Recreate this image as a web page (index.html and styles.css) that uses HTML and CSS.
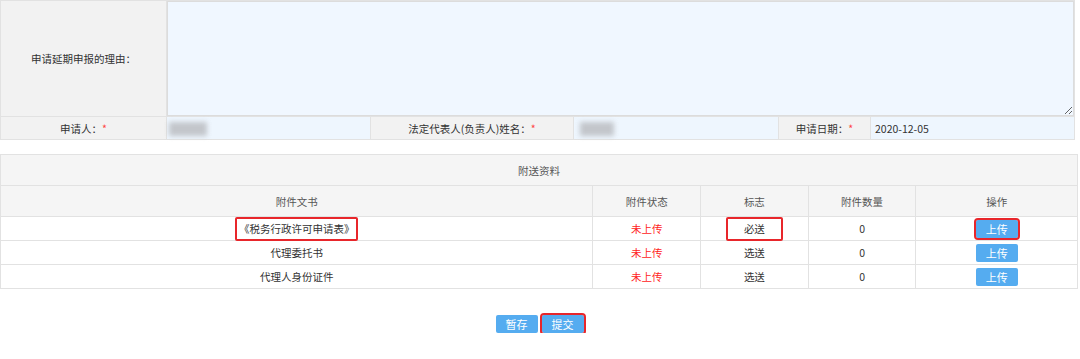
FILE: index.html
```html
<!DOCTYPE html>
<html lang="zh-CN">
<head>
    <meta charset="UTF-8">
    <title>延期申报申请</title>
    <link rel="stylesheet" href="styles.css">
</head>
<body>
    <table class="apply-form">
        <colgroup>
            <col style="width: 166px">
            <col style="width: 204px">
            <col style="width: 203px">
            <col style="width: 205px">
            <col style="width: 92px">
            <col>
        </colgroup>
        <tr class="reason-row">
            <td class="label">申请延期申报的理由：</td>
            <td class="value" colspan="5"><textarea class="reason"></textarea></td>
        </tr>
        <tr class="info-row">
            <td class="label">申请人：<span class="star">*</span></td>
            <td class="value"><span class="masked"></span></td>
            <td class="label">法定代表人(负责人)姓名：<span class="star">*</span></td>
            <td class="value"><span class="masked short"></span></td>
            <td class="label">申请日期：<span class="star">*</span></td>
            <td class="value date">2020-12-05</td>
        </tr>
    </table>

    <table class="attach-table">
        <colgroup>
            <col style="width: 55%">
            <col style="width: 10%">
            <col style="width: 10%">
            <col style="width: 10%">
            <col>
        </colgroup>
        <tr class="caption-row">
            <th colspan="5">附送资料</th>
        </tr>
        <tr class="head-row">
            <th>附件文书</th>
            <th>附件状态</th>
            <th>标志</th>
            <th>附件数量</th>
            <th>操作</th>
        </tr>
        <tr>
            <td><span class="mark">《税务行政许可申请表》</span></td>
            <td class="status">未上传</td>
            <td><span class="mark flag">必送</span></td>
            <td>0</td>
            <td><button class="btn mark-btn">上传</button></td>
        </tr>
        <tr>
            <td>代理委托书</td>
            <td class="status">未上传</td>
            <td>选送</td>
            <td>0</td>
            <td><button class="btn">上传</button></td>
        </tr>
        <tr>
            <td>代理人身份证件</td>
            <td class="status">未上传</td>
            <td>选送</td>
            <td>0</td>
            <td><button class="btn">上传</button></td>
        </tr>
    </table>

    <div class="actions">
        <button class="btn">暂存</button>
        <button class="btn mark-btn">提交</button>
    </div>
</body>
</html>
```

FILE: styles.css
```css
body {
    margin: 0;
    font-family: "Noto Sans CJK SC", "Liberation Sans", sans-serif;
    font-size: 10.5px;
    color: #333;
    background: #fff;
}
.apply-form {
    width: 1075px;
    border-collapse: collapse;
    table-layout: fixed;
}
.apply-form td {
    border: 1px solid #e2e2e2;
    padding: 0;
}
.apply-form .label {
    background: #f2f2f2;
    text-align: center;
}
.apply-form .value {
    background: #eef6fe;
}
.reason-row td {
    height: 114px;
}
.reason {
    display: block;
    box-sizing: border-box;
    width: 100%;
    height: 115px;
    margin: 0;
    border: 1px solid #dcdcdc;
    background: #f0f7ff;
    resize: vertical;
}
.info-row td {
    height: 22px;
}
.star {
    color: #f44;
}
.masked {
    display: inline-block;
    width: 38px;
    height: 14px;
    margin-left: 2px;
    vertical-align: middle;
    background: #c3c6cb;
    filter: blur(2.5px);
}
.masked.short {
    width: 34px;
    margin-left: 6px;
}
.date {
    padding-left: 4px !important;
}
.attach-table {
    width: 1078px;
    margin-top: 14px;
    border-collapse: collapse;
    table-layout: fixed;
}
.attach-table th, .attach-table td {
    border: 1px solid #e2e2e2;
    text-align: center;
    font-weight: normal;
    padding: 0;
}
.attach-table th {
    background: #f5f5f5;
    color: #555;
    height: 30px;
}
.attach-table td {
    height: 23px;
}
.status {
    color: #f22;
}
.mark {
    display: inline-block;
    padding: 3px 2px;
    margin: -5px 0;
    line-height: 14px;
    border: 2px solid #e8262b;
    border-radius: 2px;
}
.flag {
    padding: 3px 16px;
}
.btn {
    border: none;
    border-radius: 2px;
    background: #55acf0;
    color: #fff;
    font-family: inherit;
    font-size: 11px;
    width: 42px;
    height: 18px;
    padding: 0;
    cursor: pointer;
}
.mark-btn {
    outline: 2px solid #e8262b;
    outline-offset: 0;
}
.actions {
    display: flex;
    justify-content: center;
    gap: 4px;
    margin-top: 26px;
    padding-right: 1px;
}
```
